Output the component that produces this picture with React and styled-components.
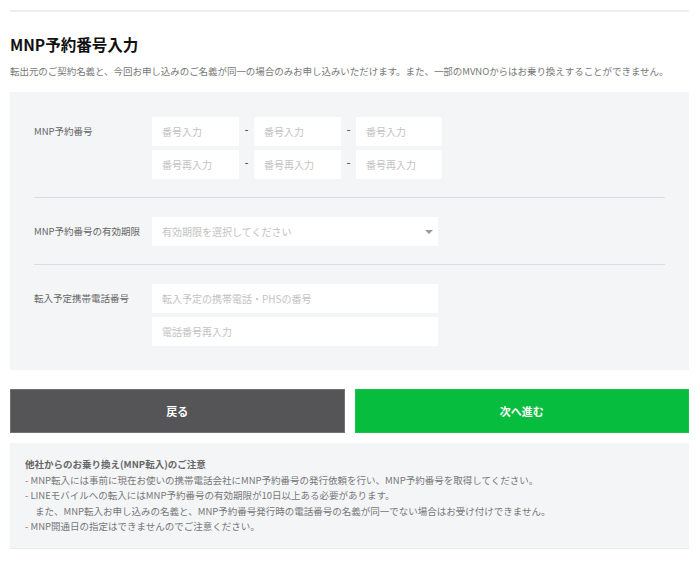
import React from "react";
import styled, { createGlobalStyle } from "styled-components";

const GlobalStyle = createGlobalStyle`
  html, body {
    margin: 0;
    padding: 0;
    background: #fff;
  }
  body {
    font-family: "Noto Sans CJK JP", "Noto Sans", sans-serif;
    color: #333;
  }
  * { box-sizing: border-box; }
`;

const Page = styled.div`
  width: 700px;
  padding: 10px 11px 0 10px;
`;

const TopRule = styled.div`
  height: 2px;
  background: #eeeeee;
`;

const Title = styled.h2`
  margin: 22px 0 0;
  font-size: 15.5px;
  line-height: 20px;
  font-weight: 700;
  color: #111;
`;

const Lead = styled.p`
  margin: 10px 0 0;
  font-size: 9.5px;
  line-height: 14px;
  color: #777;
  white-space: nowrap;
  letter-spacing: -0.05px;
`;

const Panel = styled.div`
  margin-top: 14px;
  background: #f4f5f7;
  padding: 6px 24px 6px;
`;

const Row = styled.div`
  display: flex;
  align-items: flex-start;
  padding: 19px 0 18px;
  border-bottom: ${(p) => (p.last ? "none" : "1px solid #dcdde0")};
`;

const Label = styled.div`
  width: 118px;
  flex-shrink: 0;
  font-size: 9.5px;
  line-height: 29px;
  color: #666;
  white-space: nowrap;
`;

const Fields = styled.div`
  display: flex;
  flex-direction: column;
  gap: 4px;
`;

const Line = styled.div`
  display: flex;
  align-items: center;
`;

const Input = styled.input`
  width: ${(p) => p.w || 87}px;
  height: 29px;
  border: none;
  outline: none;
  background: #fff;
  padding: 0 10px;
  font-family: inherit;
  font-size: 10px;
  color: #333;
  &::placeholder {
    color: #c2c2c2;
  }
`;

const Dash = styled.span`
  width: 15px;
  text-align: center;
  font-size: 10px;
  font-weight: 700;
  color: #555;
  line-height: 1;
  margin-top: -6px;
`;

const Select = styled.div`
  position: relative;
  width: 286px;
  height: 29px;
  background: #fff;
  padding: 0 10px;
  font-size: 10px;
  line-height: 29px;
  color: #c2c2c2;
  &::after {
    content: "";
    position: absolute;
    right: 5px;
    top: 13px;
    border-left: 4px solid transparent;
    border-right: 4px solid transparent;
    border-top: 4px solid #9a9a9a;
  }
`;

const Buttons = styled.div`
  display: flex;
  gap: 10px;
  margin-top: 19px;
`;

const Button = styled.button`
  flex: 1;
  height: 44px;
  border: 1px solid ${(p) => (p.primary ? "#19c24d" : "#717173")};
  background: ${(p) => (p.primary ? "#06bd3e" : "#555557")};
  color: #fff;
  font-family: inherit;
  font-size: 11px;
  font-weight: 700;
  cursor: pointer;
`;

const Notice = styled.div`
  margin-top: 10px;
  background: #f4f5f7;
  border-bottom: 1px solid #ececee;
  padding: 14px 15px 13px;
  font-size: 9.5px;
  line-height: 15.5px;
  color: #777;
  white-space: nowrap;
`;

const NoticeTitle = styled.div`
  font-weight: 700;
  color: #666;
`;

const NoticeItem = styled.div`
  padding-left: ${(p) => (p.indent ? "10px" : "0")};
`;

export default function App() {
  return (
    <>
      <GlobalStyle />
      <Page>
        <TopRule />
        <Title>MNP予約番号入力</Title>
        <Lead>
          転出元のご契約名義と、今回お申し込みのご名義が同一の場合のみお申し込みいただけます。また、一部のMVNOからはお乗り換えすることができません。
        </Lead>

        <Panel>
          <Row>
            <Label>MNP予約番号</Label>
            <Fields>
              <Line>
                <Input placeholder="番号入力" />
                <Dash>-</Dash>
                <Input placeholder="番号入力" />
                <Dash>-</Dash>
                <Input w={86} placeholder="番号入力" />
              </Line>
              <Line>
                <Input placeholder="番号再入力" />
                <Dash>-</Dash>
                <Input placeholder="番号再入力" />
                <Dash>-</Dash>
                <Input w={86} placeholder="番号再入力" />
              </Line>
            </Fields>
          </Row>
          <Row>
            <Label>MNP予約番号の有効期限</Label>
            <Select>有効期限を選択してください</Select>
          </Row>
          <Row last>
            <Label>転入予定携帯電話番号</Label>
            <Fields>
              <Input w={286} placeholder="転入予定の携帯電話・PHSの番号" />
              <Input w={286} placeholder="電話番号再入力" />
            </Fields>
          </Row>
        </Panel>

        <Buttons>
          <Button>戻る</Button>
          <Button primary>次へ進む</Button>
        </Buttons>

        <Notice>
          <NoticeTitle>他社からのお乗り換え(MNP転入)のご注意</NoticeTitle>
          <NoticeItem>
            - MNP転入には事前に現在お使いの携帯電話会社にMNP予約番号の発行依頼を行い、MNP予約番号を取得してください。
          </NoticeItem>
          <NoticeItem>
            - LINEモバイルへの転入にはMNP予約番号の有効期限が10日以上ある必要があります。
          </NoticeItem>
          <NoticeItem indent>
            また、MNP転入お申し込みの名義と、MNP予約番号発行時の電話番号の名義が同一でない場合はお受け付けできません。
          </NoticeItem>
          <NoticeItem>- MNP開通日の指定はできませんのでご注意ください。</NoticeItem>
        </Notice>
      </Page>
    </>
  );
}
